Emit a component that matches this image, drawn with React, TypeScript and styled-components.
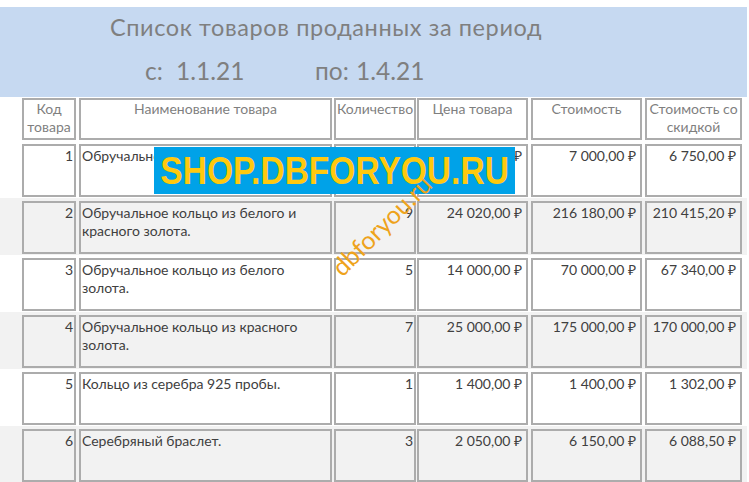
import styled, { createGlobalStyle } from 'styled-components';

const GlobalStyle = createGlobalStyle`
  html, body {
    margin: 0;
    padding: 0;
    background: #ffffff;
  }
  body {
    width: 749px;
    height: 482px;
    overflow: hidden;
    font-family: Lato, 'Open Sans', sans-serif;
  }
`;

const Page = styled.div`
  position: relative;
  width: 747px;
  padding-top: 7px;
`;

const TitleBand = styled.header`
  height: 90px;
  box-sizing: border-box;
  padding: 8px 0 0 110px;
  background: #c6d9f1;
  color: #7f7f7f;
`;

const Title = styled.div`
  font-size: 23.5px;
  line-height: 25px;
  letter-spacing: 0.6px;
  white-space: nowrap;
`;

const PeriodRow = styled.div`
  display: flex;
  margin: 16px 0 0 35px;
  font-size: 24.5px;
  line-height: 29px;
`;

const PeriodPart = styled.span<{ $w?: number }>`
  width: ${(p) => (p.$w ? `${p.$w}px` : 'auto')};
  white-space: nowrap;
`;

const HeaderRow = styled.div`
  display: flex;
  padding: 1px 0 1px 22px;
`;

const Band = styled.div<{ $alt: boolean }>`
  display: flex;
  height: 57px;
  box-sizing: border-box;
  padding: 3px 0 1px 22px;
  background: ${(p) => (p.$alt ? '#f2f2f2' : '#ffffff')};
`;

const Box = styled.div<{ $w: number; $ml: number }>`
  box-sizing: border-box;
  width: ${(p) => p.$w}px;
  margin-left: ${(p) => p.$ml}px;
  border: 2px solid #acacac;
  font-size: 14px;
  line-height: 18px;
`;

const HeadCell = styled(Box)`
  height: 42px;
  padding: 0 1px;
  color: #7f7f7f;
  text-align: center;
`;

const Cell = styled(Box)<{ $align: 'left' | 'right'; $pr: number }>`
  height: 53px;
  padding: 1px ${(p) => p.$pr}px 0 1px;
  color: #404040;
  text-align: ${(p) => p.$align};
  white-space: nowrap;
`;

const Stamp = styled.div`
  position: absolute;
  left: 154px;
  top: 147px;
  width: 361px;
  height: 47px;
  display: flex;
  align-items: center;
  justify-content: center;
  background: #00a2e8;
  overflow: hidden;
`;

const StampText = styled.span`
  display: inline-block;
  font-family: 'Liberation Sans', Arial, sans-serif;
  font-weight: 700;
  font-size: 39px;
  line-height: 47px;
  color: #ffc90e;
  transform: scaleX(0.86);
  white-space: nowrap;
`;

const Diagonal = styled.div`
  position: absolute;
  left: 311px;
  top: 210px;
  width: 140px;
  font-size: 25px;
  line-height: 30px;
  color: #eea31c;
  text-align: center;
  transform: rotate(-45deg);
  white-space: nowrap;
`;

const columns = [
  { w: 54, ml: 0 },
  { w: 253, ml: 3 },
  { w: 82, ml: 2 },
  { w: 111, ml: 1 },
  { w: 111, ml: 3 },
  { w: 97, ml: 3 },
];

const headers: string[][] = [
  ['Код', 'товара'],
  ['Наименование товара'],
  ['Количество'],
  ['Цена товара'],
  ['Стоимость'],
  ['Стоимость со', 'скидкой'],
];

type Sale = {
  id: number;
  name: string[];
  qty: number;
  price: string;
  total: string;
  discounted: string;
};

const sales: Sale[] = [
  { id: 1, name: ['Обручальное кольцо.'], qty: 1, price: '7 000,00 ₽', total: '7 000,00 ₽', discounted: '6 750,00 ₽' },
  {
    id: 2,
    name: ['Обручальное кольцо из белого и', 'красного золота.'],
    qty: 9,
    price: '24 020,00 ₽',
    total: '216 180,00 ₽',
    discounted: '210 415,20 ₽',
  },
  {
    id: 3,
    name: ['Обручальное кольцо из белого', 'золота.'],
    qty: 5,
    price: '14 000,00 ₽',
    total: '70 000,00 ₽',
    discounted: '67 340,00 ₽',
  },
  {
    id: 4,
    name: ['Обручальное кольцо из красного', 'золота.'],
    qty: 7,
    price: '25 000,00 ₽',
    total: '175 000,00 ₽',
    discounted: '170 000,00 ₽',
  },
  { id: 5, name: ['Кольцо из серебра 925 пробы.'], qty: 1, price: '1 400,00 ₽', total: '1 400,00 ₽', discounted: '1 302,00 ₽' },
  { id: 6, name: ['Серебряный браслет.'], qty: 3, price: '2 050,00 ₽', total: '6 150,00 ₽', discounted: '6 088,50 ₽' },
];

const Lines = ({ lines }: { lines: string[] }) => (
  <>
    {lines.map((l, i) => (
      <div key={i}>{l}</div>
    ))}
  </>
);

const App = () => {
  return (
    <Page>
      <GlobalStyle />
      <TitleBand>
        <Title>Список товаров проданных за период</Title>
        <PeriodRow>
          <PeriodPart $w={31}>с:</PeriodPart>
          <PeriodPart $w={139}>1.1.21</PeriodPart>
          <PeriodPart $w={41}>по:</PeriodPart>
          <PeriodPart>1.4.21</PeriodPart>
        </PeriodRow>
      </TitleBand>

      <HeaderRow>
        {headers.map((h, i) => (
          <HeadCell key={i} $w={columns[i].w} $ml={columns[i].ml}>
            <Lines lines={h} />
          </HeadCell>
        ))}
      </HeaderRow>

      {sales.map((s, r) => {
        const values = [String(s.id), s.name, String(s.qty), s.price, s.total, s.discounted];
        return (
          <Band key={s.id} $alt={r % 2 === 1}>
            {values.map((v, i) => (
              <Cell
                key={i}
                $w={columns[i].w}
                $ml={columns[i].ml}
                $align={i === 1 ? 'left' : 'right'}
                $pr={i >= 3 ? 4 : 1}
              >
                {Array.isArray(v) ? <Lines lines={v} /> : v}
              </Cell>
            ))}
          </Band>
        );
      })}

      <Stamp>
        <StampText>SHOP.DBFORYOU.RU</StampText>
      </Stamp>
      <Diagonal>dbforyou.ru</Diagonal>
    </Page>
  );
};

export default App;
